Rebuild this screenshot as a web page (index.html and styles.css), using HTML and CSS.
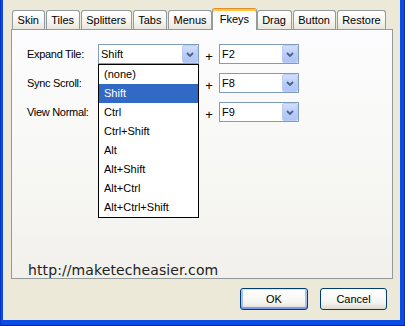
FILE: index.html
```html
<!DOCTYPE html>
<html>
<head>
<meta charset="utf-8">
<link rel="stylesheet" href="styles.css">
</head>
<body>
<div class="window">
  <div class="client">
    <div class="tabs">
      <div class="tab">Skin</div>
      <div class="tab">Tiles</div>
      <div class="tab">Splitters</div>
      <div class="tab">Tabs</div>
      <div class="tab">Menus</div>
      <div class="tab tab-active">Fkeys</div>
      <div class="tab">Drag</div>
      <div class="tab">Button</div>
      <div class="tab">Restore</div>
    </div>
    <div class="panel">
      <div class="form">
        <span class="label">Expand Tile:</span>
        <div class="combo combo-open">
          <span class="combo-text">Shift</span>
          <span class="combo-btn"><svg width="8" height="5" viewBox="0 0 8 5"><path d="M1 1 L4 4 L7 1" fill="none" stroke="#4D6185" stroke-width="1.8"/></svg></span>
          <ul class="dropdown">
            <li class="item">(none)</li>
            <li class="item item-selected">Shift</li>
            <li class="item">Ctrl</li>
            <li class="item">Ctrl+Shift</li>
            <li class="item">Alt</li>
            <li class="item">Alt+Shift</li>
            <li class="item">Alt+Ctrl</li>
            <li class="item">Alt+Ctrl+Shift</li>
          </ul>
        </div>
        <span class="plus">+</span>
        <div class="combo">
          <span class="combo-text">F2</span>
          <span class="combo-btn"><svg width="8" height="5" viewBox="0 0 8 5"><path d="M1 1 L4 4 L7 1" fill="none" stroke="#4D6185" stroke-width="1.8"/></svg></span>
        </div>

        <span class="label">Sync Scroll:</span>
        <div class="combo">
          <span class="combo-text"></span>
          <span class="combo-btn"><svg width="8" height="5" viewBox="0 0 8 5"><path d="M1 1 L4 4 L7 1" fill="none" stroke="#4D6185" stroke-width="1.8"/></svg></span>
        </div>
        <span class="plus">+</span>
        <div class="combo">
          <span class="combo-text">F8</span>
          <span class="combo-btn"><svg width="8" height="5" viewBox="0 0 8 5"><path d="M1 1 L4 4 L7 1" fill="none" stroke="#4D6185" stroke-width="1.8"/></svg></span>
        </div>

        <span class="label">View Normal:</span>
        <div class="combo">
          <span class="combo-text"></span>
          <span class="combo-btn"><svg width="8" height="5" viewBox="0 0 8 5"><path d="M1 1 L4 4 L7 1" fill="none" stroke="#4D6185" stroke-width="1.8"/></svg></span>
        </div>
        <span class="plus">+</span>
        <div class="combo">
          <span class="combo-text">F9</span>
          <span class="combo-btn"><svg width="8" height="5" viewBox="0 0 8 5"><path d="M1 1 L4 4 L7 1" fill="none" stroke="#4D6185" stroke-width="1.8"/></svg></span>
        </div>
      </div>
      <div class="url">http://maketecheasier.com</div>
    </div>
    <div class="buttons">
      <button class="btn btn-default">OK</button>
      <button class="btn">Cancel</button>
    </div>
  </div>
</div>
</body>
</html>
```

FILE: styles.css
```css
html, body {
  margin: 0;
  padding: 0;
}
body {
  width: 405px;
  height: 326px;
  overflow: hidden;
  font-family: "Liberation Sans", Arial, sans-serif;
  font-size: 11px;
  color: #000;
  background: #0B4CE3;
}
.window {
  display: flex;
  height: 326px;
  box-sizing: border-box;
  padding: 0 5px 6px 3px;
  background: #0B4CE3;
  box-shadow: inset 1px 0 #0835C8, inset -1px 0 #0030C0, inset 0 -1px #00229E;
}
.client {
  flex: 1;
  display: flex;
  flex-direction: column;
  background: #ECE9D8;
  padding: 8px 7px 0 8px;
}
.tabs {
  display: flex;
  align-items: flex-end;
  height: 21px;
  padding-left: 1px;
  gap: 1px;
}
.tab {
  height: 19px;
  box-sizing: border-box;
  padding: 0 4.6px;
  border: 1px solid #919B9C;
  border-bottom: none;
  border-radius: 3px 3px 0 0;
  background: linear-gradient(#FFFFFF, #F6F5F1 55%, #E8E6DC);
  display: flex;
  align-items: center;
  white-space: nowrap;
}
.tab-active {
  position: relative;
  z-index: 1;
  height: 22px;
  margin: 0 -1px -1px -1px;
  padding: 0 6.5px 1px 6.5px;
  background: #FCFCFE;
  border-top: 1px solid #E68B2C;
  box-shadow: inset 0 2px #FFC73C;
}
.panel {
  height: 250px;
  box-sizing: border-box;
  border: 1px solid #919B9C;
  background: linear-gradient(#FCFCFE, #F7F7F4 60%, #F1F0EB);
  display: flex;
  flex-direction: column;
  padding: 14px 0 0 15px;
}
.form {
  display: grid;
  grid-template-columns: 71px 101px 20px 80px;
  grid-auto-rows: 20px;
  row-gap: 9px;
  align-items: center;
}
.label {
  white-space: nowrap;
  letter-spacing: -0.3px;
}
.combo {
  position: relative;
  height: 20px;
  box-sizing: border-box;
  border: 1px solid #7F9DB9;
  background: #fff;
  display: flex;
  align-items: center;
  justify-content: space-between;
  padding-left: 2px;
}
.combo-open {
  z-index: 2;
}
.combo-btn {
  width: 16px;
  height: 18px;
  box-sizing: border-box;
  border: 1px solid #BBCDF6;
  border-radius: 2px;
  background: linear-gradient(#D2DEFC, #B7CBF8 60%, #AFC5F6);
  display: flex;
  align-items: center;
  justify-content: center;
}
.dropdown {
  position: absolute;
  top: calc(100% + 1px);
  left: -1px;
  right: -1px;
  margin: 0;
  padding: 0;
  list-style: none;
  border: 1px solid #000;
  background: #fff;
}
.item {
  height: 19px;
  line-height: 19px;
  padding-left: 5px;
  white-space: nowrap;
}
.item-selected {
  background: #316AC5;
  color: #fff;
}
.plus {
  text-align: center;
  font-size: 13px;
  padding-top: 4px;
}
.url {
  margin-top: auto;
  margin-left: 1px;
  font-family: "DejaVu Sans", sans-serif;
  font-size: 14px;
  line-height: 16px;
  letter-spacing: 0.1px;
  color: #222;
}
.buttons {
  display: flex;
  justify-content: flex-end;
  gap: 12px;
  padding-top: 9px;
  padding-right: 6px;
}
.btn {
  width: 67px;
  height: 22px;
  box-sizing: border-box;
  margin: 0;
  padding: 0;
  border: 1px solid #003C74;
  border-radius: 3px;
  background: linear-gradient(#FFFFFF, #F4F4F0 70%, #DCD8CC);
  font-family: "Liberation Sans", Arial, sans-serif;
  font-size: 11px;
  color: #000;
}
.btn-default {
  width: 68px;
  box-shadow: inset 0 1px #CEE7FF, inset 0 -2px #7A9AEE, inset 2px 0 #A8C2F0, inset -2px 0 #A8C2F0;
}
```
